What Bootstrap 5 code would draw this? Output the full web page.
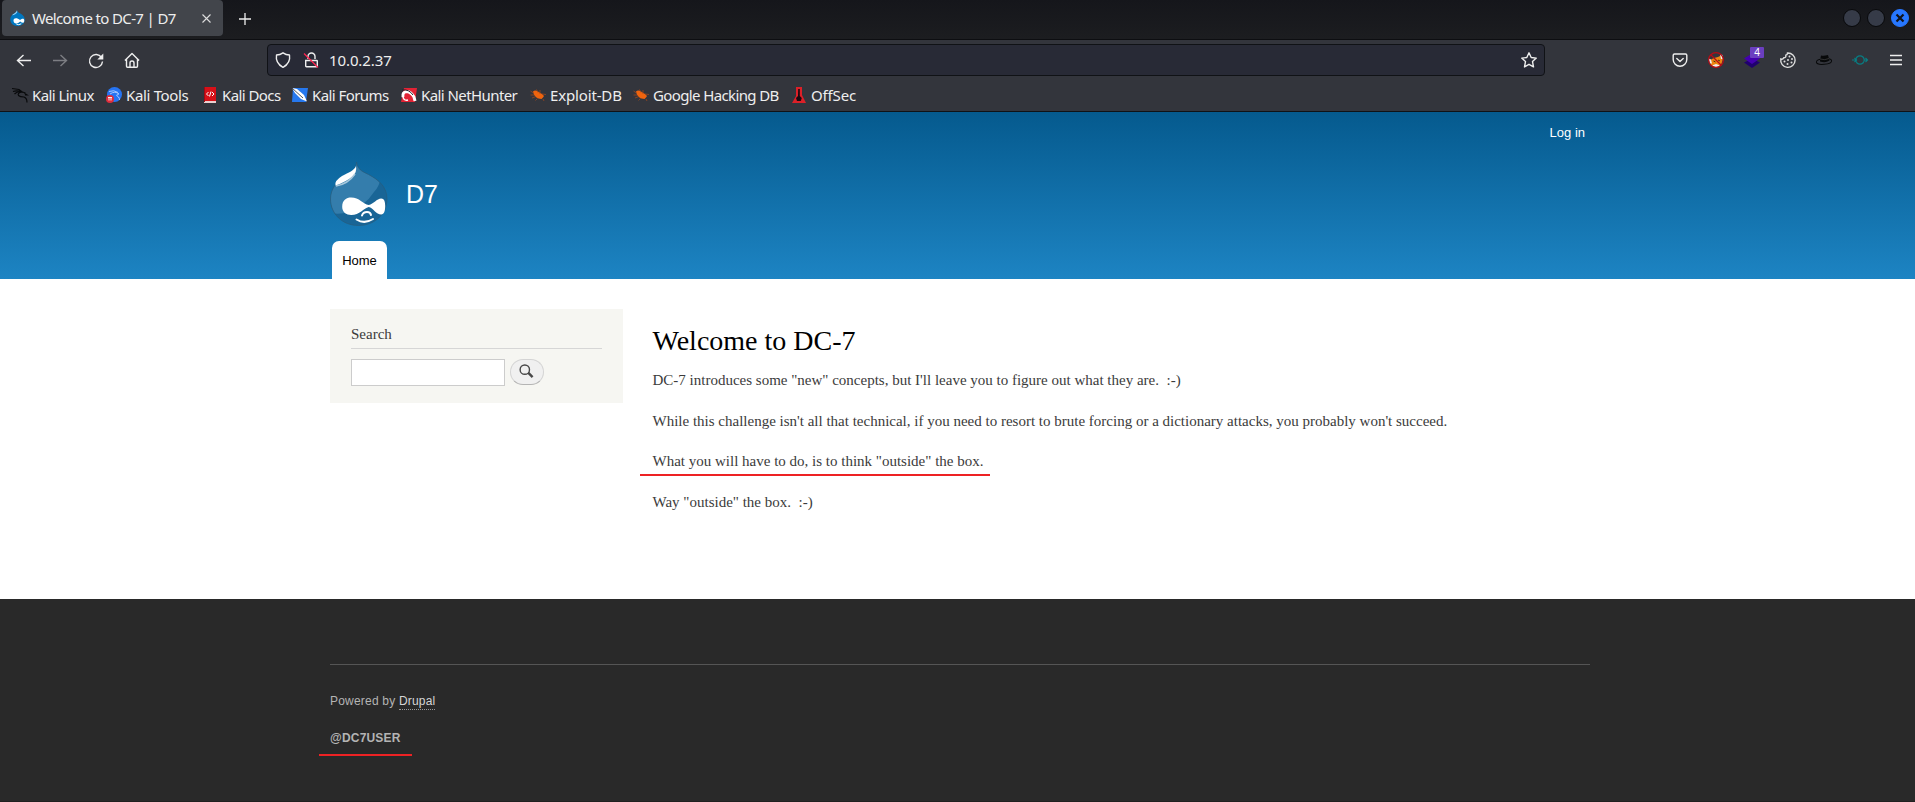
<!DOCTYPE html>
<html lang="en">
<head>
<meta charset="utf-8">
<title>Welcome to DC-7 | D7</title>
<link rel="stylesheet" href="https://cdn.jsdelivr.net/npm/bootstrap@5.3.0/dist/css/bootstrap.min.css">
<style>
html,body{height:100%;overflow:hidden}
body{font-family:"Liberation Serif",serif;font-size:15px;line-height:22px;color:#3b3b3b;background:#fff}
svg{display:block;flex:none;overflow:visible}
.chrome{font-family:"Noto Sans",sans-serif;font-size:15px;color:#eee;background:#33353c;height:112px;border-bottom:1px solid #101216}
.tabstrip{height:40px;background:linear-gradient(#15161b,#1c1d20);border-bottom:1px solid #0d0e11;padding-left:2px}
.browser-tab{width:221px;height:36px;background:#42454b;border-radius:4px;padding:0 12px 0 8px}
.browser-tab span{margin-left:7px;letter-spacing:-.64px}
.win-btn{width:18px;height:18px;border-radius:50%;background:#363b48;border:1px solid #08090b}
.win-close{background:#2777ff;border-color:#2777ff}
.toolbar{height:40px;padding:0 11px 0 16px}
.urlbar{width:1278px;height:32px;background:#282a36;border:1px solid #101216;border-radius:4px;padding:0 7px}
.ext-badge{left:6px;top:-5px;width:14px;height:11px;background:#6b3fc0;border-radius:1px;font-size:10px;line-height:11px}
.bookmarks{height:29px;padding-left:12px;letter-spacing:-.58px}
.bookmarks>div{gap:4px}
.bk1{width:94px}.bk2{width:96px;letter-spacing:-.34px}.bk3{width:90px}.bk4{width:109px}.bk5{width:129px}.bk6,.bk8{letter-spacing:-.15px}.bk6{width:103px}.bk7{width:158px;letter-spacing:-.62px}
.wrap{width:1260px;margin:0 auto;position:relative;left:2.5px}
.site-header{height:167px;background:linear-gradient(#055a8e,#1d84c3);font-family:"Liberation Sans",sans-serif}
.site-header a{font-size:13px;color:#fff;text-decoration:none;line-height:18px}
.login{padding:12px 5px 0 0;height:50px}
.site-name{font-size:26px;color:#fff;line-height:30px;margin-left:17.500px;padding-top:17px;transform:scaleX(.96);transform-origin:left}
.site-header .home{width:55px;height:38px;background:#fff;color:#000;border-radius:7px 7px 0 0;margin:15px 0 0 2px;padding-top:11px}
.main-area{height:320px;padding-top:30px}
.side{width:293px;height:94px;background:#f6f6f2;padding:14px 21px}
.side h2{font-size:15px;line-height:22px;height:26px;border-bottom:1px solid #d6d6d6;margin:0 0 10px;color:#3b3b3b;font-weight:400}
.side input{width:154px;height:27px;border:1px solid #ccc;background:#fff}
.search-btn{width:34px;height:26px;border:1px solid #d4d4d4;border-bottom-color:#b4b4b4;border-radius:13px;background:#f0f0f0;margin-left:5px}
.article{padding:14px 0 0 29.500px}
.article h1{font-size:28px;line-height:36px;font-weight:400;color:#000;margin:0 0 10px}
.article p{margin:0 0 18.7px;white-space:pre}
.marker{position:absolute;background:#ed2224;height:2px}
.m1{left:-13px;top:23.500px;width:350px}
.m2{left:-11.500px;top:25px;width:93px}
.site-footer{height:203px;background:#292929;color:#b4b4b4;font-family:"Liberation Sans",sans-serif;font-size:12px;letter-spacing:.2px;line-height:18px;padding-top:65px;border-bottom:1px solid #202020}
.site-footer .rule{border-top:1px solid #555;padding-top:27px}
.site-footer a{color:#d6d6d6;text-decoration:none;border-bottom:1px dotted #999;padding-bottom:1px}
</style>
<script src="https://cdn.jsdelivr.net/npm/bootstrap@5.3.0/dist/js/bootstrap.bundle.min.js"></script>
</head>
<body>
<svg width="0" height="0" class="position-absolute"><defs>
<g id="bug"><path d="M3 4.500q2-2 5 0l4 2.500 2 2-1 1.500-1.500 1.500-3-.5Q4 10 3 4.500z" fill="#f0640e"/><path d="M.5 8h3.500M2 11l4-1.500M5.500 13.500l2-2M6.500 2.500l1.500 3M10 3v4M12 7l4 .5M13 12l1 2M.5 4l3 2" stroke="#a8491a" stroke-width=".7"/></g>
</defs></svg>
<div class="chrome">
  <div class="tabstrip d-flex">
    <div class="browser-tab d-flex align-items-center">
      <svg width="15" height="16" viewBox="0 0 58 64"><path d="M27 0c1 9 6 9 17 16 9 6 14 14 14 23 0 15-13 25-29 25S0 53 0 37c0-10 6-18 15-23C23 9 26 8 27 0z" fill="#0077c0"/><path d="M27 1c-2 10-12 12-20 20 9-1 18-6 21-12z" fill="#9bd4f5"/><path d="M13 42c0-12 15-12 26-2 10-8 17-7 17 2 0 12-8 11-16 4-11 11-27 11-27-4z" fill="#fff"/><path d="M24 56q10 6 20-1" stroke="#fff" stroke-width="4" fill="none"/></svg>
      <span class="text-nowrap">Welcome to DC-7 | D7</span>
      <svg class="ms-auto" width="9" height="9" viewBox="0 0 9 9" stroke="#ddd" stroke-width="1.100"><path d="M.5.5l8 8M8.500.5l-8 8"/></svg>
    </div>
    <svg style="margin:13px 0 0 16px" width="12" height="12" viewBox="0 0 12 12" stroke="#eee" stroke-width="1.300"><path d="M6 0v12M0 6h12"/></svg>
    <div class="d-flex ms-auto" style="gap:6px;padding:9px 6px 0 0">
      <div class="win-btn"></div><div class="win-btn"></div>
      <div class="win-btn win-close d-flex align-items-center justify-content-center"><svg width="8" height="8" viewBox="0 0 8 8" stroke="#10131a" stroke-width="2.200"><path d="M.5.5l7 7M7.500.5l-7 7"/></svg></div>
    </div>
  </div>
  <div class="toolbar d-flex align-items-center">
    <svg width="16" height="16" viewBox="0 0 16 16" fill="none" stroke="#eee" stroke-width="1.400"><path d="M15 8.500H2M7.500 3L1.500 8.500l6 5.500"/></svg>
    <svg style="margin-left:20px" width="16" height="16" viewBox="0 0 16 16" fill="none" stroke="#7d7e83" stroke-width="1.400"><path d="M1 8.500h13M8.500 3l6 5.500-6 5.500"/></svg>
    <svg style="margin-left:20px" width="16" height="16" viewBox="0 0 16 16" fill="none" stroke="#eee" stroke-width="1.400"><path d="M13.500 5.500A6.500 6.500 0 1 0 14.500 9.500"/><path d="M15.300 1.500v6h-6z" fill="#eee" stroke="none"/></svg>
    <svg style="margin-left:19.500px" width="16" height="16" viewBox="0 0 16 16" fill="none" stroke="#eee" stroke-width="1.400" stroke-linejoin="round"><path d="M.9 8.500L8 1.500l7.100 7M2.500 7v7.300q0 1 1 1h9q1 0 1-1V7M6 15V11q0-2 2-2t2 2v4"/></svg>
    <div class="urlbar d-flex align-items-center" style="margin-left:127.500px">
      <svg width="16" height="16" viewBox="0 0 16 16" fill="none" stroke="#eee" stroke-width="1.400" stroke-linejoin="round"><path d="M8 .8q3 2 6.500 2.200Q15.800 11 8 15.300.2 11 1.500 3 5 2.800 8 .8z"/></svg>
      <svg style="margin-left:12px" width="16" height="16" viewBox="0 0 16 16" fill="none" stroke="#eee" stroke-width="1.400"><path d="M5 7V4.500a3.500 3.500 0 0 1 7 0V7M2.700 8.500h11q.6 0 .6.600v5q0 .7-.7.7H3.400q-.7 0-.7-.7z"/><path d="M1 1.500l14 14" stroke="#ff2450" stroke-width="1.300"/></svg>
      <span style="margin-left:10px;letter-spacing:-.1px">10.0.2.37</span>
      <svg class="ms-auto" width="16" height="16" viewBox="0 0 16 16" fill="none" stroke="#eee" stroke-width="1.400" stroke-linejoin="round"><path d="M8 .8l2.200 4.700 5.100.6-3.800 3.500 1 5.300L8 12.300l-4.500 2.600 1-5.300L.7 6.100l5.100-.6z"/></svg>
    </div>
    <div class="d-flex ms-auto" style="gap:20px">
      <svg width="16" height="16" viewBox="0 0 16 16" fill="none" stroke="#eee" stroke-width="1.400" stroke-linecap="round" stroke-linejoin="round"><path d="M2.500 2h11q1.300 0 1.300 1.300V7.500a6.800 6.800 0 0 1-13.600 0V3.300Q1.200 2 2.500 2zM4.800 6.500L8 9.500l3.200-3"/></svg>
      <svg width="16" height="16" viewBox="0 0 16 16"><path d="M2 8l4-2 4-1 4-2 1 4-2 6-5 3-5-3z" fill="#ed8510"/><path d="M.5 6.500l2.500 1 1 4-2 0zM12 2l2.500 1 .5 4-2 0zM4 13.500l4-1.500 4 1.500-4 2z" fill="#eee"/><path d="M5.500 9l2 1M10 8l2 1" stroke="#463019"/><circle cx="8" cy="8" r="7.400" fill="none" stroke="#b70b16" stroke-width="1.200"/><path d="M3 3l10 10" stroke="#b70b16" stroke-width="1.200"/></svg>
      <div class="position-relative"><svg width="16" height="16" viewBox="0 0 16 16"><path d="M0 10.500l8-4 8 4-8 5.500z" fill="#20006e"/><path d="M0 6.500l8-5 8 5-8 5.500z" fill="#4400ae"/></svg><div class="ext-badge position-absolute text-center text-white">4</div></div>
      <svg width="16" height="16" viewBox="0 0 16 16"><path d="M7.500 1a7.200 7.200 0 1 1-6.700 6q2 .8 3-1.200 2.500 0 2-2.500Q7.500 3 7.500 1z" fill="none" stroke="#ddd" stroke-width="1.400"/><g fill="#ddd"><circle cx="9.500" cy="4.500" r="1"/><circle cx="12" cy="7" r="1"/><circle cx="8" cy="8" r="1"/><circle cx="4.500" cy="9.500" r="1"/><circle cx="11.500" cy="10.500" r="1"/><circle cx="7.500" cy="12" r="1"/></g></svg>
      <svg width="16" height="16" viewBox="0 0 16 16"><ellipse cx="8" cy="9.500" rx="7.600" ry="2.800" transform="rotate(-5 8 9.500)" fill="none" stroke="#08090a" stroke-width="1"/><path d="M4 8.500l1-5q3 .8 7-.5l1.500 5.500q-4 3-9.500 1z" fill="#08090a"/><path d="M4 7q5 1.500 9-.5" stroke="#444" fill="none" stroke-width=".7"/></svg>
      <svg width="16" height="16" viewBox="0 0 16 16" fill="none" stroke="#087d83" stroke-width="1.200"><circle cx="8" cy="8" r="4.200"/><path d="M0 8h4M12 8h3M2.500 6l2 2-2 2M13.500 6l2 2-2 2"/></svg>
      <svg width="16" height="16" viewBox="0 0 16 16" stroke="#eee" stroke-width="1.400"><path d="M2 3.500h12M2 8h12M2 12.500h12"/></svg>
    </div>
  </div>
  <div class="bookmarks d-flex text-nowrap">
    <div class="bk1 d-flex align-items-center"><svg width="16" height="16" viewBox="0 0 16 16" fill="none" stroke="#08090b" stroke-width="1.200"><path d="M0 1.500l7 1 4 3M1 4.500Q5 3 10 5M2.500 7q3-3 8-2l3 1M10 5q-5 1-3.500 3.500Q8 10 12 10q3 1 3 5.500M12 6l3 2h-2"/></svg>Kali Linux</div>
    <div class="bk2 d-flex align-items-center"><svg width="16" height="16" viewBox="0 0 16 16"><circle cx="8.500" cy="7.500" r="7.500" fill="#2674f3"/><path d="M3 4.500q5-2 9 1M4 7q5-3.500 9 0-4.500.5-.5 3 1 1 1 3" stroke="#b5d0ff" stroke-width=".9" fill="none"/><circle cx="4" cy="12" r="4" fill="#df2c3b"/><path d="M2 10.500h4M3 10.500v3M5 10.500v3" stroke="#fff" stroke-width=".9"/></svg>Kali Tools</div>
    <div class="bk3 d-flex align-items-center"><svg width="16" height="16" viewBox="0 0 16 16"><path d="M2 0h12v14H2z" fill="#d71018"/><path d="M2 14h12v2H2z" fill="#ead0d0"/><path d="M2 0h1v15H2z" fill="#9f0b13"/><path d="M6.500 5l-2 2 2 2M10 5l2 2-2 2M9 4.500l-1.500 5" fill="none" stroke="#fff" stroke-width="1"/></svg>Kali Docs</div>
    <div class="bk4 d-flex align-items-center"><svg width="16" height="16" viewBox="0 0 16 16"><path d="M1 1h15l-2 14H0z" fill="#2678ee"/><path d="M0 1l5 1 7 6 3 6.500-6-2.500-6-6z" fill="#fff"/><path d="M0 1l11 10" stroke="#252a33" stroke-width=".8"/></svg>Kali Forums</div>
    <div class="bk5 d-flex align-items-center"><svg width="16" height="16" viewBox="0 0 16 16"><path d="M3 1h13l-2 14H0z" fill="#e22335"/><path d="M2 10Q1 5 6 4.500 10 5 13 10l1 4" stroke="#fff" stroke-width="3" fill="none"/><path d="M2 9q0 5 5 4" stroke="#fff" stroke-width="1.500" fill="none"/><path d="M1 3q7-1 11 5" stroke="#20242c" fill="none"/></svg>Kali NetHunter</div>
    <div class="bk6 d-flex align-items-center"><svg width="16" height="16"><use href="#bug"/></svg>Exploit-DB</div>
    <div class="bk7 d-flex align-items-center"><svg width="16" height="16"><use href="#bug"/></svg>Google Hacking DB</div>
    <div class="bk8 d-flex align-items-center"><svg width="16" height="16" viewBox="0 0 16 16"><path d="M5 0h6v8l4 8H1l4-7z" fill="#dc2028"/><path d="M7.200 2h1.600v7l2 2-1 3H6l-1-3 2-2z" fill="#190b10"/></svg>OffSec</div>
  </div>
</div>
<header class="site-header">
  <div class="wrap">
    <div class="login d-flex justify-content-end"><a href="#">Log in</a></div>
    <div class="d-flex">
      <svg width="58" height="64" viewBox="0 0 58 64"><defs><clipPath id="drop"><path d="M26.500 0c1.500 8 5 9 12 12.500C49 18 57 25 57 37c0 15-12.500 26.500-28.500 26.500S.5 52 .5 37c0-10 6-17 13-21.500C21 11 26 9 26.500 0z"/></clipPath></defs><g clip-path="url(#drop)"><path d="M0 0h58v64H0z" fill="#196596"/><path d="M0 0h49q5 20-5 30-9 14-26 20-8 3-18 1z" fill="#347dac"/></g><path d="M26.500 0c1.500 8 5 9 12 12.500C49 18 57 25 57 37c0 15-12.500 26.500-28.500 26.500S.5 52 .5 37c0-10 6-17 13-21.500C21 11 26 9 26.500 0z" fill="none" stroke="#285b7b" stroke-width=".7"/><path d="M26 4q1 6-3 10Q16 20 5.500 23.500 4 19 12 14C19 10 24 9 26 4z" fill="#fff"/><path d="M6 24q12-2 19-12" fill="none" stroke="#a8c8dc" stroke-width="1.500"/><path d="M12.200 45c0-7 4-9.500 9-9.500 8 0 12 6.500 17.500 7.500 5-1 8-6.500 12.500-6.500 3 0 4 3 4 7.500s-1 8.500-4 8.500c-5 0-8-6.500-12.500-7.500-5 1-9 8-17.500 8-5 0-9-3-9-8z" fill="#fff"/><path d="M32 53.500q1-3.500 5-3.500 3.500 0 4 3M26.500 57.500q8 5 16.500-.5" fill="none" stroke="#fff" stroke-width="2" stroke-linecap="round"/></svg>
      <div class="site-name">D7</div>
    </div>
    <a href="#" class="home d-block text-center">Home</a>
  </div>
</header>
<main class="main-area">
  <div class="wrap d-flex">
    <aside class="side">
      <h2>Search</h2>
      <div class="d-flex"><input type="text" aria-label="Search"><button class="search-btn p-0 d-flex align-items-center justify-content-center" aria-label="Search"><svg style="margin:-2px 2px 0 0" width="15" height="15" viewBox="0 0 16 16" fill="none" stroke="#484848"><circle cx="6.200" cy="6" r="5" stroke-width="1.500"/><path d="M10 9.500l4.500 4.500" stroke-width="2.600"/></svg></button></div>
    </aside>
    <article class="article">
      <h1>Welcome to DC-7</h1>
      <p>DC-7 introduces some "new" concepts, but I'll leave you to figure out what they are.&nbsp; :-)</p>
      <p>While this challenge isn't all that technical, if you need to resort to brute forcing or a dictionary attacks, you probably won't succeed.</p>
      <p class="position-relative">What you will have to do, is to think "outside" the box.<i class="marker m1"></i></p>
      <p>Way "outside" the box.&nbsp; :-)</p>
    </article>
  </div>
</main>
<footer class="site-footer">
  <div class="wrap"><div class="rule">
    <div>Powered by <a href="#">Drupal</a></div>
    <div class="position-relative fw-bold" style="margin-top:19px">@DC7USER<i class="marker m2"></i></div>
  </div></div>
</footer>
</body>
</html>
